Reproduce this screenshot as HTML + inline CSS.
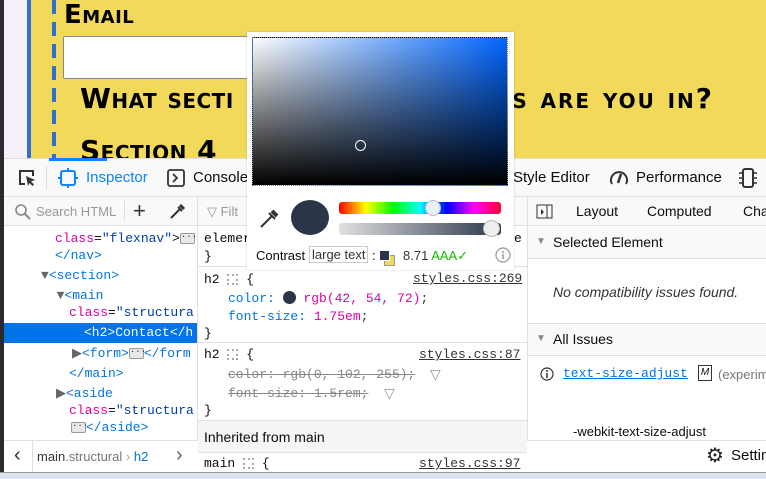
<!DOCTYPE html>
<html><head><style>
*{margin:0;padding:0;box-sizing:border-box}
body{width:766px;height:479px;overflow:hidden;position:relative;background:#fff;font-family:"Liberation Sans",sans-serif;font-size:13px;color:#0c0c0d}
.a{position:absolute;white-space:nowrap}
.m{font-family:"Liberation Mono",monospace;font-size:13px}
.tag{color:#0074e8}.attr{color:#dd00a9}.val{color:#003eaa}
.pink{color:#dd00a9}
.cap{font-family:"DejaVu Sans",sans-serif;font-weight:bold;font-variant:small-caps;color:#000}
.dots{display:inline-block;width:11px;height:11px;border:2px dotted #aaa;vertical-align:middle}
.ell{display:inline-block;width:15px;height:11px;border:1px solid #999;border-radius:2px;background:#e8e8e8;font-size:9px;line-height:7px;text-align:center;vertical-align:middle;color:#333}
</style></head><body>
<!-- page -->
<div class="a" style="left:0;top:0;width:766px;height:158px;background:#f2d95a"></div>
<div class="a" style="left:0;top:0;width:4px;height:479px;background:#2a2a2e"></div>
<div class="a" style="left:4px;top:0;width:23px;height:158px;background:#f5eff9"></div>
<div class="a" style="left:27px;top:0;width:4px;height:158px;background:#2f6fd4"></div>
<div class="a" style="left:52px;top:0;width:4px;height:158px;background:repeating-linear-gradient(#2f6fd4 0 14px,transparent 14px 22px)"></div>
<div class="a cap" style="left:64px;top:0;font-size:26px;letter-spacing:0.5px">Email</div>
<div class="a" style="left:63px;top:36px;width:200px;height:43px;background:#fff;border:1px solid #888;border-radius:2px"></div>
<div class="a cap" style="left:80px;top:82px;font-size:28px;letter-spacing:0.5px">What secti</div>
<div class="a cap" style="right:52px;top:82px;font-size:28px;letter-spacing:2px">s are you in?</div>
<div class="a cap" style="left:80px;top:134px;font-size:28px;letter-spacing:0.5px">Section 4</div>
<!-- toolbar -->
<div class="a" style="left:4px;top:158px;width:762px;height:39px;background:#f9f9fa;border-top:1px solid #ddd;border-bottom:1px solid #e0e0e2"></div>
<div class="a" style="left:49px;top:158px;width:58px;height:3px;background:#0a84ff"></div>
<svg class="a" style="left:17px;top:168px" width="20" height="20"><path d="M8 16H3V3h13v5" fill="none" stroke="#333" stroke-width="2"/><path d="M9 8l9 4-4 1.5 3 3-1.5 1.5-3-3L11 18z" fill="#333"/></svg>
<div class="a" style="left:46px;top:166px;width:1px;height:24px;background:#ddd"></div>
<svg class="a" style="left:58px;top:168px" width="20" height="20"><rect x="3" y="3" width="14" height="14" rx="2" fill="none" stroke="#0a84ff" stroke-width="2"/><path d="M10 0v3M10 17v3M0 10h3M17 10h3" stroke="#0a84ff" stroke-width="2"/></svg>
<div class="a" style="left:86px;top:169px;font-size:15px;color:#0a84ff">Inspector</div>
<svg class="a" style="left:166px;top:168px" width="20" height="20"><rect x="2" y="2" width="16" height="16" rx="2" fill="none" stroke="#333" stroke-width="1.8"/><path d="M7 6l4 4-4 4" fill="none" stroke="#333" stroke-width="1.8"/></svg>
<div class="a" style="left:193px;top:169px;font-size:15px">Console</div>
<div class="a" style="left:513px;top:169px;font-size:15px">Style Editor</div>
<svg class="a" style="left:608px;top:167px" width="22" height="22"><path d="M4 17A8 8 0 1 1 18 17" fill="none" stroke="#333" stroke-width="2"/><path d="M13 7l-3 9" stroke="#333" stroke-width="2.5"/></svg>
<div class="a" style="left:636px;top:169px;font-size:15px">Performance</div>
<svg class="a" style="left:738px;top:167px" width="20" height="22"><rect x="5" y="2" width="10" height="18" rx="2" fill="none" stroke="#333" stroke-width="2"/><path d="M1 6h4M1 11h4M1 16h4M15 6h4M15 11h4M15 16h4" stroke="#333" stroke-width="1.5"/></svg>
<!-- second bar -->
<div class="a" style="left:4px;top:197px;width:762px;height:29px;background:#f9f9fa;border-bottom:1px solid #e0e0e2"></div>
<svg class="a" style="left:14px;top:203px" width="18" height="18"><circle cx="7" cy="7" r="5" fill="none" stroke="#888" stroke-width="1.6"/><path d="M11 11l5 5" stroke="#888" stroke-width="2"/></svg>
<div class="a" style="left:36px;top:204px;font-size:13px;color:#999">Search HTML</div>
<div class="a" style="left:124px;top:201px;width:1px;height:20px;background:#ddd"></div>
<div class="a" style="left:133px;top:198px;font-size:22px;color:#333">+</div>
<svg class="a" style="left:168px;top:203px" width="18" height="18"><path d="M3 15l9-9M10 4l4 4" stroke="#333" stroke-width="2"/><path d="M12 2l4 4" stroke="#333" stroke-width="3"/></svg>
<div class="a" style="left:197px;top:197px;width:1px;height:243px;background:#e0e0e2"></div>
<div class="a" style="left:207px;top:204px;font-size:13px;color:#999">▽ Filt</div>
<div class="a" style="left:527px;top:197px;width:1px;height:275px;background:#e0e0e2"></div>
<svg class="a" style="left:536px;top:203px" width="18" height="18"><rect x="1" y="2" width="15" height="13" fill="none" stroke="#333"/><path d="M11 2v13" stroke="#333"/><path d="M5 6l3 3-3 3z" fill="#333"/></svg>
<div class="a" style="left:576px;top:203px;font-size:14px">Layout</div>
<div class="a" style="left:647px;top:203px;font-size:14px">Computed</div>
<div class="a" style="left:743px;top:203px;font-size:14px">Cha</div>
<!-- markup -->
<div class="a m" style="left:55px;top:231px"><span class="attr">class</span>=<span class="val">"flexnav"</span>&gt;<span class="ell">···</span></div>
<div class="a m tag" style="left:55px;top:248px">&lt;/nav&gt;</div>
<div class="a m" style="left:41px;top:268px;color:#666">▼<span class="tag">&lt;section&gt;</span></div>
<div class="a m" style="left:41px;top:288px;color:#666">&nbsp;&nbsp;▼<span class="tag">&lt;main</span></div>
<div class="a m" style="left:69px;top:305px"><span class="attr">class</span>=<span class="val">"structura</span></div>
<div class="a" style="left:4px;top:323px;width:193px;height:20px;background:#0074e8"></div>
<div class="a m" style="left:84px;top:325px;color:#fff">&lt;h2&gt;Contact&lt;/h</div>
<div class="a m" style="left:72px;top:346px;color:#666">▶<span class="tag">&lt;form&gt;</span><span class="ell">···</span><span class="tag">&lt;/form</span></div>
<div class="a m tag" style="left:69px;top:366px">&lt;/main&gt;</div>
<div class="a m" style="left:56px;top:386px;color:#666">▶<span class="tag">&lt;aside</span></div>
<div class="a m" style="left:69px;top:403px"><span class="attr">class</span>=<span class="val">"structura</span></div>
<div class="a m" style="left:71px;top:420px"><span class="ell">···</span><span class="tag">&lt;/aside&gt;</span></div>
<!-- breadcrumb -->
<div class="a" style="left:4px;top:440px;width:524px;height:32px;border-top:1px solid #e0e0e2;background:#fff"></div>
<div class="a" style="left:14px;top:444px;font-size:20px;color:#333">‹</div>
<div class="a" style="left:32px;top:441px;width:1px;height:31px;background:#e0e0e2"></div>
<div class="a" style="left:37px;top:449px;font-size:13px;color:#333">main<span style="color:#777">.structural</span> <span style="color:#aaa">›</span> <span class="tag">h2</span></div>
<div class="a" style="left:176px;top:444px;font-size:20px;color:#666">›</div>
<!-- rules -->
<div class="a m" style="left:204px;top:231px">elemer</div>
<div class="a m" style="left:204px;top:249px">}</div>
<div class="a m" style="left:514px;top:231px">e</div>
<div class="a" style="left:198px;top:266px;width:329px;height:1px;background:#e0e0e2"></div>
<div class="a m" style="left:204px;top:272px">h2 <span class="dots"></span> {</div>
<div class="a m" style="left:413px;top:271px;color:#333;text-decoration:underline">styles.css:269</div>
<div class="a m" style="left:228px;top:291px;color:#0074e8">color: <span style="display:inline-block;width:13px;height:13px;border-radius:50%;background:#2a3648;vertical-align:-2px"></span> <span class="pink">rgb(42, 54, 72)</span><span style="color:#333">;</span></div>
<div class="a m" style="left:228px;top:309px;color:#0074e8">font-size: <span class="pink">1.75em</span><span style="color:#333">;</span></div>
<div class="a m" style="left:204px;top:326px">}</div>
<div class="a" style="left:198px;top:342px;width:329px;height:1px;background:#e0e0e2"></div>
<div class="a m" style="left:204px;top:347px">h2 <span class="dots"></span> {</div>
<div class="a m" style="left:419px;top:347px;color:#333;text-decoration:underline">styles.css:87</div>
<div class="a m" style="left:228px;top:367px;color:#888;text-decoration:line-through">color: rgb(0, 102, 255);</div>
<div class="a" style="left:430px;top:366px;color:#999;font-size:14px">▽</div>
<div class="a m" style="left:228px;top:386px;color:#888;text-decoration:line-through">font-size: 1.5rem;</div>
<div class="a" style="left:384px;top:385px;color:#999;font-size:14px">▽</div>
<div class="a m" style="left:204px;top:403px">}</div>
<div class="a" style="left:198px;top:420px;width:329px;height:33px;background:#f5f5f6;border-top:1px solid #e0e0e2;border-bottom:1px solid #e0e0e2"></div>
<div class="a" style="left:204px;top:429px;font-size:14px">Inherited from main</div>
<div class="a m" style="left:204px;top:456px">main <span class="dots"></span> {</div>
<div class="a m" style="left:419px;top:456px;color:#333;text-decoration:underline">styles.css:97</div>
<!-- right panel -->
<div class="a" style="left:528px;top:227px;width:238px;height:32px;background:#f9f9fa;border-bottom:1px solid #e0e0e2"></div>
<div class="a" style="left:536px;top:236px;font-size:10px;color:#888">▼</div>
<div class="a" style="left:553px;top:234px;font-size:14px">Selected Element</div>
<div class="a" style="left:553px;top:284px;font-size:14px;font-style:italic;color:#333">No compatibility issues found.</div>
<div class="a" style="left:528px;top:323px;width:238px;height:33px;background:#f9f9fa;border-top:1px solid #e0e0e2;border-bottom:1px solid #e0e0e2"></div>
<div class="a" style="left:536px;top:333px;font-size:10px;color:#888">▼</div>
<div class="a" style="left:553px;top:331px;font-size:14px">All Issues</div>
<svg class="a" style="left:540px;top:367px" width="14" height="14"><circle cx="7" cy="7" r="6" fill="none" stroke="#333" stroke-width="1.2"/><path d="M7 6v5M7 3v2" stroke="#333" stroke-width="1.5"/></svg>
<div class="a m" style="left:563px;top:366px;color:#0074e8;text-decoration:underline">text-size-adjust</div>
<div class="a" style="left:698px;top:365px;width:14px;height:16px;border:1px solid #333;font-size:10px;font-style:italic;text-align:center;line-height:14px">M</div>
<div class="a" style="left:718px;top:367px;font-size:13px;color:#777">(experim</div>
<div class="a" style="left:573px;top:424px;font-size:13px">-webkit-text-size-adjust</div>
<div class="a" style="left:528px;top:440px;width:238px;height:1px;background:#e0e0e2"></div>
<div class="a" style="left:706px;top:443px;font-size:20px;color:#222">⚙</div>
<div class="a" style="left:731px;top:447px;font-size:15px">Settin</div>
<div class="a" style="left:0;top:472px;width:766px;height:7px;background:#dbe3ee;border-top:1px solid #999"></div>
<!-- color picker -->
<div class="a" style="left:247px;top:32px;width:267px;height:238px;background:#fff;box-shadow:0 0 2px rgba(0,0,0,.2)"></div>
<div class="a" style="left:252px;top:37px;width:256px;height:149px;background:linear-gradient(to top,#000,rgba(0,0,0,0)),linear-gradient(to right,#fff,#0066ff);border:1px dotted #888"></div>
<div class="a" style="left:355px;top:140px;width:11px;height:11px;border:1.5px solid #fff;border-radius:50%"></div>
<svg class="a" style="left:258px;top:208px" width="22" height="22"><path d="M3 19l11-11M11 5l6 6" stroke="#333" stroke-width="2" fill="none"/><path d="M14 3l5 5" stroke="#333" stroke-width="4"/></svg>
<div class="a" style="left:291px;top:200px;width:38px;height:35px;border-radius:50%;background:#2a3648"></div>
<div class="a" style="left:339px;top:202px;width:162px;height:12px;border-radius:3px;background:linear-gradient(to right,red,#ff0,#0f0,#0ff,#00f,#f0f,#f03)"></div>
<div class="a" style="left:425px;top:200px;width:16px;height:16px;border-radius:50%;background:#e8f0fa;border:1px solid #bbb"></div>
<div class="a" style="left:339px;top:223px;width:162px;height:12px;border-radius:3px;background:linear-gradient(to right,#e0e0e0,#2a3648)"></div>
<div class="a" style="left:483px;top:220px;width:17px;height:17px;border-radius:50%;background:#eee;border:1px solid #bbb"></div>
<div class="a" style="left:256px;top:248px;font-size:13px">Contrast</div>
<div class="a" style="left:309px;top:246px;border:1px solid #ccc;padding:0 2px;font-size:13px;color:#333">large text</div>
<div class="a" style="left:372px;top:248px;font-size:13px">:</div>
<div class="a" style="left:384px;top:255px;width:11px;height:11px;background:#f2d95a;border:1px solid #999"></div>
<div class="a" style="left:379px;top:250px;width:11px;height:11px;background:#2a3648;border:1px solid #fff"></div>
<div class="a" style="left:403px;top:248px;font-size:13px;color:#333">8.71 <span style="color:#12bc00">AAA✓</span></div>
<svg class="a" style="left:495px;top:247px" width="16" height="16"><circle cx="8" cy="8" r="7" fill="none" stroke="#999" stroke-width="1.2"/><path d="M8 7v5M8 4v2" stroke="#999" stroke-width="1.5"/></svg>
</body></html>
